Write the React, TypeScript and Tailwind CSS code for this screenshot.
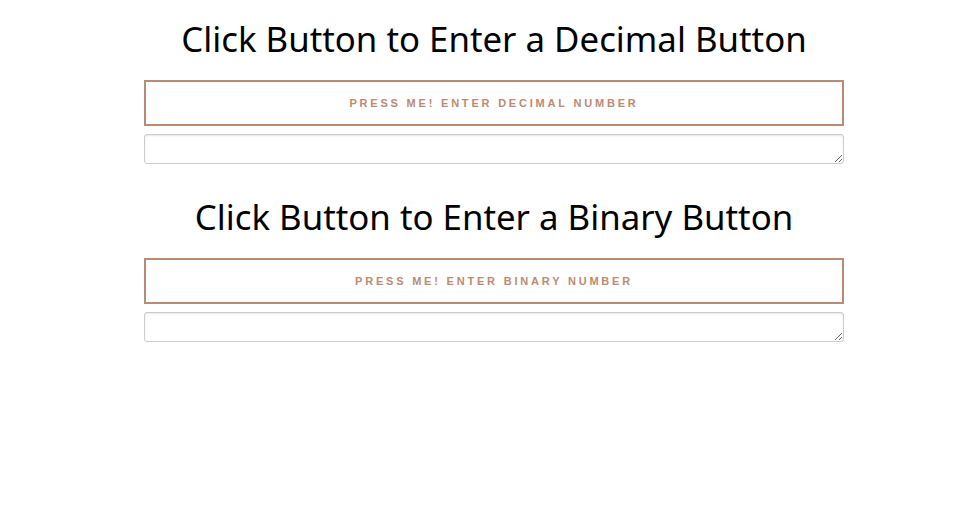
export default function App() {
  const sections = [
    { title: 'Click Button to Enter a Decimal Button', label: 'Press me! Enter Decimal Number' },
    { title: 'Click Button to Enter a Binary Button', label: 'Press me! Enter Binary Number' },
  ];

  return (
    <div className="min-h-[507px] bg-white" style={{ fontFamily: '"Noto Sans", sans-serif' }}>
      <div className="ml-[144px] w-[700px] pt-[16px]">
        {sections.map((s) => (
          <div key={s.title} className="mb-[30px]">
            <h1 className="text-center text-[34.8px] leading-[46px] font-normal text-black">{s.title}</h1>
            <button className="mt-[18px] block h-[46px] w-full border-2 border-[#b98b73] bg-white text-[11px] font-bold tracking-[2.8px] text-[#b98b73] uppercase" style={{ fontFamily: '"Liberation Sans", sans-serif' }}>
              {s.label}
            </button>
            <textarea className="mt-[8px] block h-[30px] w-full rounded-[3px] border border-[#cccccc] shadow-[inset_0_1px_2px_rgba(0,0,0,0.1)]" />
          </div>
        ))}
      </div>
    </div>
  );
}
